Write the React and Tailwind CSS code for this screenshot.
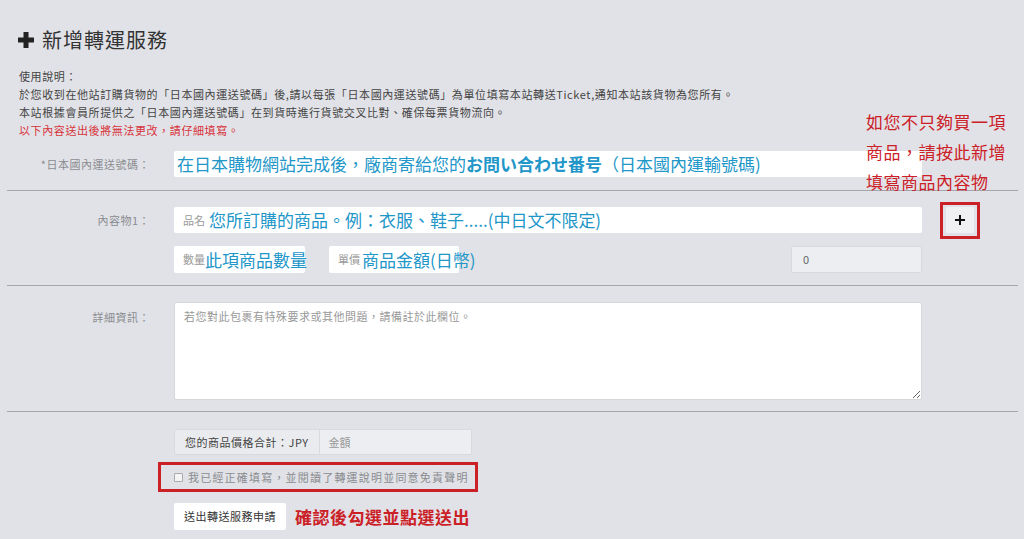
const FONT = { fontFamily: '"Noto Sans CJK TC", "Noto Sans", "Liberation Sans", sans-serif' };

function Label({ children }) {
  return (
    <div className="w-[167px] shrink-0 pr-[24px] text-right text-[11px] tracking-[0.5px] text-[#8a8c90]">
      {children}
    </div>
  );
}

function Blue({ children, bold }) {
  return (
    <span className={`whitespace-nowrap text-[17px] text-[#2196c8] ${bold ? 'font-bold' : 'font-normal'}`}>{children}</span>
  );
}

export default function App() {
  return (
    <div className="relative min-h-[539px] w-[1024px] overflow-hidden bg-[#e1e2e7] text-[#333]" style={FONT}>
      {/* title */}
      <div className="flex items-center gap-[8px] pl-[18px] pt-[27px]">
        <svg width="16" height="16" viewBox="0 0 16 16">
          <path d="M5.5 0h5v5.5h5.5v5h-5.5v5.5h-5v-5.5h-5.5v-5h5.5z" fill="#222" />
        </svg>
        <h1 className="text-[20px] leading-[26px] tracking-[1px] text-[#333]">新增轉運服務</h1>
      </div>

      {/* instructions */}
      <div className="mt-[14px] pl-[19px] text-[11px] leading-[18px] tracking-[0.6px] text-[#444]">
        <p>使用說明：</p>
        <p>於您收到在他站訂購貨物的「日本國內運送號碼」後,請以每張「日本國內運送號碼」為單位填寫本站轉送Ticket,通知本站該貨物為您所有。</p>
        <p>本站根據會員所提供之「日本國內運送號碼」在到貨時進行貨號交叉比對、確保每票貨物流向。</p>
        <p className="text-[#d8323a]">以下內容送出後將無法更改，請仔細填寫。</p>
      </div>

      <div className="mx-[7px] mt-[12px] w-[1011px]">
        {/* row 1 */}
        <div className="flex items-center border-b border-[#a3a6ab] pb-[13px]">
          <Label>*日本國內運送號碼：</Label>
          <div className="flex h-[26px] w-[748px] items-center rounded-[2px] bg-white pl-[3px]">
            <Blue>在日本購物網站完成後，廠商寄給您的</Blue>
            <Blue bold>お問い合わせ番号</Blue>
            <Blue>（日本國內運輸號碼)</Blue>
          </div>
        </div>

        {/* row 2 */}
        <div className="border-b border-[#a3a6ab] pb-[12px] pt-[16px]">
          <div className="flex h-[26px] items-center">
            <Label>內容物1：</Label>
            <div className="flex h-[26px] w-[748px] items-center rounded-[2px] bg-white pl-[9px]">
              <span className="mr-[4px] text-[11px] text-[#999]">品名</span>
              <Blue>您所訂購的商品。例：衣服、鞋子.....(中日文不限定)</Blue>
            </div>
            <div className="ml-[18px] flex h-[37px] w-[40px] shrink-0 items-center justify-center border-[3px] border-[#cc2027]">
              <button className="flex h-[26px] w-[28px] items-center justify-center rounded-[2px] bg-[#eef0f2]">
                <svg width="10" height="10" viewBox="0 0 10 10">
                  <path d="M4 0h2v4h4v2h-4v4h-2v-4h-4v-2h4z" fill="#111" />
                </svg>
              </button>
            </div>
          </div>
          <div className="mt-[13px] flex h-[27px] items-center pl-[167px]">
            <div className="flex h-[27px] w-[131px] shrink-0 items-center rounded-[2px] bg-white pl-[9px]">
              <span className="shrink-0 text-[11px] text-[#999]">數量</span>
              <Blue>此項商品數量</Blue>
            </div>
            <div className="ml-[24px] flex h-[27px] w-[130px] shrink-0 items-center rounded-[2px] bg-white pl-[9px]">
              <span className="mr-[2px] shrink-0 text-[11px] text-[#999]">單價</span>
              <Blue>商品金額(日幣)</Blue>
            </div>
            <div className="ml-[332px] flex h-[27px] w-[131px] shrink-0 items-center rounded-[2px] border border-[#d6d8dc] bg-[#eceef1] pl-[11px] text-[11px] text-[#666]">
              0
            </div>
          </div>
        </div>

        {/* row 3 */}
        <div className="flex items-start border-b border-[#a3a6ab] pb-[11px] pt-[16px]">
          <div className="pt-[7px]">
            <Label>詳細資訊：</Label>
          </div>
          <textarea
            className="block h-[98px] w-[748px] resize rounded-[2px] border border-[#d6d8dc] bg-white px-[9px] py-[5px] text-[11px] tracking-[0.5px] outline-none placeholder:text-[#999]"
            placeholder="若您對此包裹有特殊要求或其他問題，請備註於此欄位。"
          />
        </div>

        {/* row 4 */}
        <div className="pl-[167px] pt-[17px]">
          <div className="flex h-[26px] w-[298px] overflow-hidden rounded-[2px] border border-[#d8dade] text-[11px]">
            <div className="flex items-center border-r border-[#d8dade] bg-[#e9ebee] px-[10px] tracking-[0.5px] text-[#444]">
              您的商品價格合計：JPY
            </div>
            <div className="flex flex-1 items-center bg-[#eceef1] pl-[9px] text-[#999]">金額</div>
          </div>
          <div className="-ml-[16px] mt-[7px] flex h-[30px] w-[320px] items-center gap-[5px] border-[3px] border-[#cc2027] pl-[13px]">
            <span className="h-[9px] w-[9px] rounded-[1px] border border-[#aaa] bg-[#f4f4f4]" />
            <span className="text-[11px] tracking-[1.2px] text-[#8a8c90]">我已經正確填寫，並閱讀了轉運說明並同意免責聲明</span>
          </div>
          <div className="mt-[11px] flex items-center">
            <button className="h-[27px] w-[112px] rounded-[2px] bg-white text-[11px] tracking-[0.5px] text-[#333]">送出轉送服務申請</button>
            <span className="ml-[9px] text-[17px] font-bold tracking-[0.5px] text-[#cc2027]">確認後勾選並點選送出</span>
          </div>
        </div>
      </div>

      {/* annotation */}
      <div className="absolute left-[866px] top-[107px] text-[17px] leading-[30px] tracking-[0.5px] text-[#cc2027]">
        <p>如您不只夠買一項</p>
        <p>商品，請按此新增</p>
        <p>填寫商品內容物</p>
      </div>
    </div>
  );
}
